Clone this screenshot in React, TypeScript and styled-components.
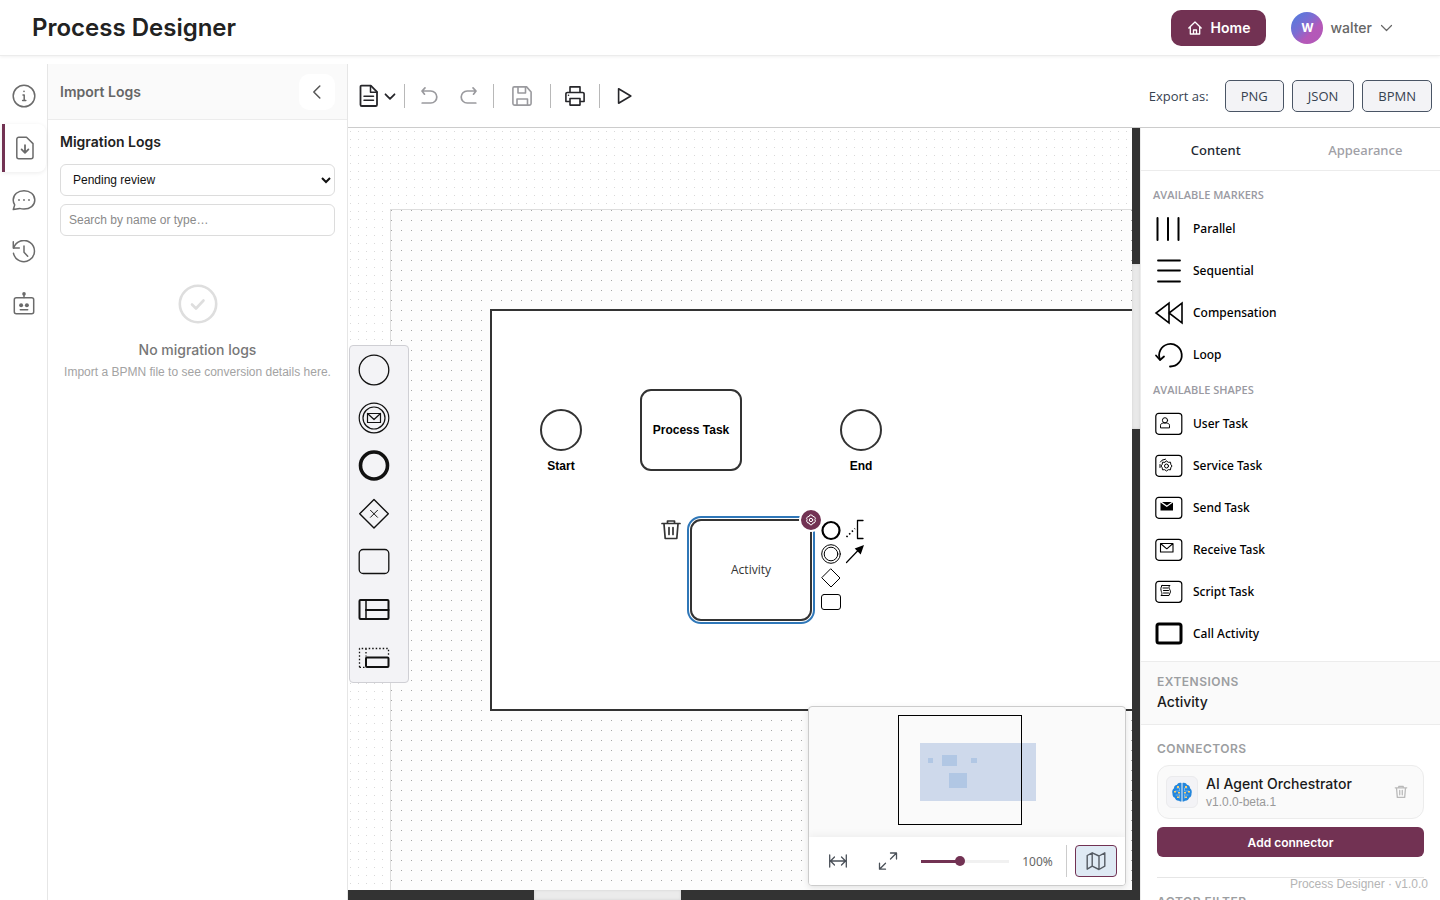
import React, { useState } from 'react';
import styled, { createGlobalStyle, css } from 'styled-components';

const ui = `Inter, "Liberation Sans", sans-serif`;
const small = `"Liberation Sans", Arial, sans-serif`;
const editor = `"Noto Sans", "Open Sans", sans-serif`;
const compact = `"Open Sans", "Noto Sans", sans-serif`;
const plum = '#723253';
const ink = '#333333';

const GlobalStyle = createGlobalStyle`
  *, *::before, *::after { box-sizing: border-box; }
  body { margin: 0; background: #ffffff; font-family: ${ui}; color: #1f1f1f; }
  button, input, select { font: inherit; color: inherit; }
  button { padding: 0; border: 0; background: none; cursor: pointer; }
  h1, h2, h3, p { margin: 0; }
  svg { display: block; flex: none; }
`;

/* ---------- page shell ---------- */

const Page = styled.div`
  position: relative;
  display: flex;
  flex-direction: column;
  height: 100vh;
  overflow: hidden;
`;

const Header = styled.header`
  display: flex;
  align-items: center;
  flex: none;
  height: 56px;
  padding: 0 47px 0 32px;
  border-bottom: 1px solid #ececec;
  box-shadow: 0 1px 3px rgba(0, 0, 0, 0.06);
`;

const Title = styled.h1`
  flex: 1;
  font-size: 24px;
  line-height: 32px;
  font-weight: 600;
  color: #222222;
`;

const HomeButton = styled.button`
  display: flex;
  align-items: center;
  gap: 8px;
  height: 36px;
  padding: 0 16px;
  border-radius: 10px;
  background: ${plum};
  color: #ffffff;
  font-size: 14px;
  font-weight: 600;
`;

const UserButton = styled.button`
  display: flex;
  align-items: center;
  gap: 7px;
  margin-left: 25px;
  color: #666666;
  font-size: 14px;
  font-weight: 500;
`;

const Avatar = styled.span`
  display: grid;
  place-items: center;
  width: 32px;
  height: 32px;
  border-radius: 50%;
  background: linear-gradient(135deg, #4a7fe0 0%, #7b6dd3 40%, #b558b8 65%, #b05ab8 100%);
  color: #ffffff;
  font-size: 12px;
  font-weight: 700;
`;

const Body = styled.div`
  display: flex;
  flex: 1;
  min-height: 0;
  padding-top: 8px;
`;

/* ---------- left rail and panel ---------- */

const Rail = styled.nav`
  display: flex;
  flex-direction: column;
  gap: 4px;
  flex: none;
  width: 48px;
  padding: 8px 1px 0 0;
  border-right: 1px solid #e6e6e6;
  color: #6b6b6b;
`;

const RailButton = styled.button<{ $active?: boolean }>`
  display: grid;
  place-items: center;
  height: 48px;
  margin-left: 2px;
  color: inherit;
  ${p =>
    p.$active &&
    css`
      padding-right: 1px;
      border-left: 3px solid ${plum};
      border-radius: 0 8px 8px 0;
      box-shadow: 0 1px 4px rgba(0, 0, 0, 0.08);
    `}
`;

const Panel = styled.aside`
  display: flex;
  flex-direction: column;
  flex: none;
  width: 300px;
  border-right: 1px solid #e6e6e6;
`;

const PanelHeader = styled.div`
  display: flex;
  align-items: center;
  justify-content: space-between;
  height: 56px;
  padding: 0 12px;
  border-bottom: 1px solid #ececec;
  background: #fafafa;
`;

const PanelTitle = styled.h2`
  font-size: 14px;
  line-height: 20px;
  font-weight: 600;
  color: #666666;
`;

const CollapseButton = styled.button`
  display: grid;
  place-items: center;
  width: 36px;
  height: 36px;
  border-radius: 10px;
  background: #ffffff;
  color: #555555;
`;

const PanelBody = styled.div`
  display: flex;
  flex-direction: column;
  gap: 8px;
  padding: 12px;
`;

const Subtitle = styled.h3`
  margin-bottom: 4px;
  font-size: 14px;
  line-height: 20px;
  font-weight: 600;
  color: #222222;
`;

const fieldStyle = css`
  width: 100%;
  height: 32px;
  padding: 0 8px;
  border: 1px solid #dcdcdc;
  border-radius: 6px;
  background: #ffffff;
  font-family: ${small};
  font-size: 12px;
`;

const Select = styled.select`
  ${fieldStyle}
  color: #111111;
`;

const Search = styled.input`
  ${fieldStyle}
  &::placeholder { color: #8a8a8a; opacity: 1; }
`;

const Empty = styled.div`
  display: flex;
  flex-direction: column;
  align-items: center;
  gap: 4px;
  padding-top: 40px;
  text-align: center;
  color: #dedede;
`;

const EmptyTitle = styled.p`
  margin-top: 12px;
  font-size: 14px;
  line-height: 20px;
  font-weight: 500;
  color: #777777;
`;

const EmptyText = styled.p`
  font-family: ${small};
  font-size: 12px;
  line-height: 16px;
  white-space: nowrap;
  color: #a3a3a3;
`;

/* ---------- toolbar ---------- */

const Main = styled.main`
  display: flex;
  flex-direction: column;
  flex: 1;
  min-width: 0;
  font-family: ${editor};
`;

const Toolbar = styled.div`
  display: flex;
  align-items: center;
  flex: none;
  height: 64px;
  padding: 0 8px 0 9px;
  border-bottom: 1px solid #cccccc;
`;

const ToolGroup = styled.div<{ $wide?: boolean }>`
  display: flex;
  align-items: center;
  gap: 16px;
  padding: 0 ${p => (p.$wide ? 16 : 12)}px;
  &:first-child { gap: 2px; padding: 0 8px 0 0; }
  & + & { border-left: 1px solid #b8b8b8; }
`;

const ToolButton = styled.button<{ $muted?: boolean }>`
  display: flex;
  align-items: center;
  gap: 3px;
  color: ${p => (p.$muted ? '#9a9a9e' : '#26262a')};
`;

const ExportGroup = styled.div`
  display: flex;
  align-items: center;
  gap: 8px;
  margin-left: auto;
  color: #364250;
  font-family: ${compact};
  font-size: 13px;
  font-weight: 500;
`;

const ExportLabel = styled.span`
  margin-right: 8px;
`;

const ExportButton = styled.button`
  height: 32px;
  padding: 0 15px;
  border: 1px solid #4a5565;
  border-radius: 5px;
  background: #f3f3f6;
`;

const Workspace = styled.div`
  display: flex;
  flex: 1;
  min-height: 0;
`;

/* ---------- canvas ---------- */

const Canvas = styled.section`
  position: relative;
  display: grid;
  grid-template: minmax(0, 1fr) 10px / minmax(0, 1fr) 8px;
  flex: 1;
  min-width: 0;
  background: ${ink};
`;

const Viewport = styled.div`
  position: relative;
  overflow: hidden;
  background-color: #ffffff;
  background-image: conic-gradient(from 0deg at 1px 1px, transparent 270deg, #d9d9d9 0);
  background-position: 2px 3px;
  background-size: 8px 8px;
`;

const Paper = styled.div`
  position: absolute;
  inset: 81px 0 0 42px;
  border: solid #dddddd;
  border-width: 1px 0 0 1px;
  background-color: #fcfcfc;
  background-image: conic-gradient(from 0deg at 1px 1px, transparent 270deg, #a6a6a6 0);
  background-size: 10px 10px;
`;

const VerticalTrack = styled.div`
  padding-top: 136px;
`;

const HorizontalTrack = styled.div`
  grid-row: 2;
  padding-left: 186px;
`;

const VerticalThumb = styled.div`
  height: 165px;
  background: #e9e9e9;
  box-shadow: inset 0 0 3px #cfcfcf;
`;

const HorizontalThumb = styled.div`
  width: 147px;
  height: 10px;
  background: #ebebeb;
  box-shadow: inset 0 0 3px #cfcfcf;
`;

const Node = styled.div<{ $x: number; $y: number; $w: number; $h: number; $r?: string; $bold?: boolean }>`
  position: absolute;
  left: ${p => p.$x}px;
  top: ${p => p.$y}px;
  width: ${p => p.$w}px;
  height: ${p => p.$h}px;
  display: grid;
  place-items: center;
  border: 2px solid ${ink};
  border-radius: ${p => p.$r ?? '0'};
  background: #ffffff;
  color: ${p => (p.$bold ? '#000000' : '#333333')};
  font-family: ${p => (p.$bold ? small : compact)};
  font-size: 12px;
  line-height: 16px;
  font-weight: ${p => (p.$bold ? 700 : 400)};
  white-space: nowrap;
`;

const Selection = styled.div`
  position: absolute;
  inset: -5px;
  border: 2px solid #2f77b8;
  border-radius: 14px;
`;

const EventLabel = styled.span`
  position: absolute;
  top: 47px;
`;

const GearBadge = styled.button`
  position: absolute;
  top: -13px;
  right: -13px;
  display: grid;
  place-items: center;
  width: 24px;
  height: 24px;
  border: 2px solid #ffffff;
  border-radius: 50%;
  background: ${plum};
  color: #ffffff;
`;

const ContextTrash = styled.button`
  position: absolute;
  top: -2px;
  left: -32px;
  color: ${ink};
`;

const ContextPad = styled.div`
  position: absolute;
  top: -3px;
  left: 127px;
  display: grid;
  grid-template-columns: 24px 24px;
  grid-auto-rows: 24px;
  color: #000000;
  & > :nth-child(n + 5) { grid-column: 1; }
`;

const Palette = styled.div`
  position: absolute;
  z-index: 1;
  top: 50%;
  left: 1px;
  transform: translateY(-50%);
  display: flex;
  flex-direction: column;
  width: 60px;
  border: 1px solid #cfcfd4;
  border-radius: 4px;
  background: #f3f3f6;
`;

const PaletteButton = styled.button`
  display: flex;
  align-items: center;
  height: 48px;
  padding-left: 8px;
  color: #111111;
`;

const Minimap = styled.div`
  position: absolute;
  right: 6px;
  bottom: 4px;
  width: 318px;
  border: 1px solid #cccccc;
  border-radius: 4px;
  background: #fafafa;
  overflow: hidden;
  box-shadow: 0 2px 6px rgba(0, 0, 0, 0.1);
`;

const ZoomBar = styled.div`
  display: flex;
  align-items: center;
  height: 48px;
  padding: 0 8px 0 4px;
  background: #ffffff;
  box-shadow: 0 -2px 8px rgba(0, 0, 0, 0.05);
  color: #4a5058;
`;

const ZoomButton = styled.button`
  display: grid;
  place-items: center;
  width: 50px;
  height: 32px;
`;

const ZoomSlider = styled.input`
  appearance: none;
  width: 88px;
  height: 10px;
  margin: 0 0 0 8px;
  background: linear-gradient(${plum}, ${plum}) left center / 44% 3px no-repeat,
    linear-gradient(#f1f1f1, #f1f1f1) center / 100% 3px no-repeat;
  &::-webkit-slider-thumb {
    appearance: none;
    width: 10px;
    height: 10px;
    border-radius: 50%;
    background: ${plum};
  }
`;

const ZoomValue = styled.span`
  flex: 1;
  text-align: center;
  font-size: 12px;
  color: #666666;
`;

const MapToggleWrap = styled.div`
  padding-left: 8px;
  border-left: 1px solid #cccccc;
`;

const MapToggle = styled.button`
  display: grid;
  place-items: center;
  width: 42px;
  height: 32px;
  border: 1px solid ${plum};
  border-radius: 4px;
  background: #dfeaf4;
  color: #555b63;
`;

/* ---------- properties panel ---------- */

const Properties = styled.aside`
  flex: none;
  width: 300px;
  overflow: hidden;
  border-left: 1px solid #ececec;
  background: #ffffff;
`;

const Tabs = styled.div`
  display: grid;
  grid-template-columns: 1fr 1fr;
  height: 43px;
  border-bottom: 1px solid #ececec;
`;

const Tab = styled.button<{ $active?: boolean }>`
  padding-top: 2px;
  font-size: 13px;
  font-weight: 500;
  color: ${p => (p.$active ? '#222831' : '#a0a0a6')};
`;

const ShapeList = styled.div`
  padding: 16px 12px 6px;
`;

const ListHeading = styled.h3`
  margin-bottom: 5px;
  font-family: ${compact};
  font-size: 11px;
  line-height: 16px;
  font-weight: 600;
  color: #9a9aa2;
  button + & { margin-top: 6px; }
`;

const ShapeButton = styled.button`
  display: flex;
  align-items: center;
  gap: 8px;
  width: 100%;
  height: 42px;
  font-size: 12px;
  line-height: 18px;
  font-weight: 500;
  color: #000000;
`;

const Extensions = styled.section`
  display: flex;
  flex-direction: column;
  gap: 2px;
  padding: 12px 16px;
  border: solid #ececec;
  border-width: 1px 0;
  background: #fafafa;
  font-family: ${ui};
`;

const Caption = styled.h3`
  font-size: 12px;
  line-height: 16px;
  font-weight: 600;
  letter-spacing: 0.04em;
  color: #9c9ea1;
`;

const ItemName = styled.p`
  font-size: 14px;
  line-height: 20px;
  font-weight: 500;
  color: #1a1a1a;
`;

const ItemVersion = styled.p`
  font-family: ${small};
  font-size: 12px;
  line-height: 16px;
  color: #999999;
`;

const Connectors = styled.section`
  display: flex;
  flex-direction: column;
  gap: 8px;
  padding: 16px;
  font-family: ${ui};
`;

const Connector = styled.div`
  display: flex;
  align-items: center;
  gap: 8px;
  height: 54px;
  padding: 0 15px 0 8px;
  border: 1px solid #ececec;
  border-radius: 12px;
  background: #fafafa;
`;

const ConnectorIcon = styled.span`
  display: grid;
  place-items: center;
  width: 32px;
  height: 32px;
  border: 1px solid #ebebed;
  border-radius: 6px;
  background: #f3f3f6;
`;

const ConnectorText = styled.div`
  flex: 1;
`;

const RemoveButton = styled.button`
  color: #b9b9b9;
`;

const AddButton = styled.button`
  height: 30px;
  border-radius: 6px;
  background: ${plum};
  color: #ffffff;
  font-size: 12px;
  font-weight: 600;
`;

const ActorFilter = styled.div`
  margin-top: 12px;
  padding-top: 16px;
  border-top: 1px solid #e6e6e6;
`;

const Version = styled.footer`
  position: absolute;
  right: 12px;
  bottom: 8px;
  font-family: ${small};
  font-size: 12px;
  line-height: 16px;
  color: #b5b5b5;
`;

/* ---------- icons ---------- */

type IconProps = { w?: number; h?: number; s?: number; children: React.ReactNode };

const Icon = ({ w = 24, h = w, s = 1.5, children }: IconProps) => (
  <svg width={w} height={h} viewBox={`0 0 ${w} ${h}`} fill="none" stroke="currentColor" strokeWidth={s}
    strokeLinecap="round" strokeLinejoin="round" aria-hidden="true">
    {children}
  </svg>
);

const railItems = [
  { name: 'Information', art: <><circle cx="12" cy="12" r="10.8" /><path d="M11 11h1.2v5.2M10.6 16.4h3.2" /><circle cx="12" cy="7.4" r=".8" fill="currentColor" stroke="none" /></> },
  { name: 'Import logs', active: true, art: <><path d="M5.8 1.2h7.7L20 7.6v13.2a2 2 0 0 1-2 2H5.8a2 2 0 0 1-2-2V3.2a2 2 0 0 1 2-2z" /><path d="M12 9.2v7.6M8.6 13.4l3.4 3.4 3.4-3.4" strokeWidth="1.8" /></> },
  { name: 'Comments', art: <><path d="M1.3 21.5l1.4-4.6C1.7 15.4 1.2 13.7 1.2 12 1.2 6.4 6 2.7 12 2.7S22.8 6.4 22.8 12 18 21 12 21c-1.5 0-3-.2-4.3-.6z" /><g fill="currentColor" stroke="none"><circle cx="7" cy="12" r=".9" /><circle cx="12" cy="12" r=".9" /><circle cx="17" cy="12" r=".9" /></g></> },
  { name: 'History', art: <><path d="M1.3 1.8v6.200h6" /><path d="M1.7 8A10.600 10.600 0 1 1 1.5 13.300" /><path d="M12 6v6.200l3.700 4" /></> },
  { name: 'Assistant', art: <><rect x="2.300" y="5.800" width="19.400" height="16" rx="2" /><path d="M12 2v3.500M8.300 17.800h7.400" /><g fill="currentColor" stroke="none"><circle cx="12" cy="1.900" r="1.800" /><circle cx="9.100" cy="13.200" r="2" /><circle cx="14.900" cy="13.200" r="2" /></g></> },
];

const FileArt = () => (
  <Icon w={24} s={1.8}>
    <path d="M4.500 1.700h9.300L20 7.900v12.800a1.300 1.300 0 0 1-1.300 1.300H4.800a1.300 1.300 0 0 1-1.300-1.300V2.700a1 1 0 0 1 1-1z" />
    <path d="M13.500 1.700v6.500H20M7 12.200h9.500M7 16.200h9.500" strokeWidth="1.500" />
  </Icon>
);
const DownArt = () => <Icon w={12} s={1.8}><path d="M1.500 4.300L6 8.800l4.500-4.500" /></Icon>;
const UndoArt = () => <Icon s={1.7}><path d="M8 3.800L5 7l2.500 3.200M5 7h8.800a6 6 0 0 1 0 12H5.200" /></Icon>;
const RedoArt = () => <Icon s={1.7}><path d="M16 3.800L19 7l-2.500 3.200M19 7h-8.800a6 6 0 0 0 0 12h8.600" /></Icon>;
const SaveArt = () => (
  <Icon s={1.6}>
    <path d="M4.200 2.900h12.400L21.100 8v11.300a1.800 1.800 0 0 1-1.800 1.800H4.700a1.800 1.800 0 0 1-1.800-1.800V4.200a1.300 1.300 0 0 1 1.300-1.300z" />
    <path d="M8 3v6h7.500V3M7 21v-6h10.500v6" />
  </Icon>
);
const PrinterArt = () => (
  <Icon s={1.6}>
    <path d="M7 8V2.900h10V8M6.500 17.500H2.900V10a1.500 1.500 0 0 1 1.500-1.500h15.200a1.500 1.500 0 0 1 1.500 1.500v7.500h-3.600" />
    <path d="M7 14.500h10v6.600H7z" />
    <circle cx="5.500" cy="11.200" r=".8" fill="currentColor" stroke="none" />
  </Icon>
);
const PlayArt = () => <Icon s={1.6}><path d="M6.600 4.800L18.800 12 6.600 19.200z" /></Icon>;

const HomeArt = () => (
  <Icon w={16} s={1.3}>
    <path d="M1.800 8L8 2l6.200 6M3.300 6.800v7.200h9.400V6.800M6.500 14v-4h3v4" />
  </Icon>
);

const TrashArt = ({ w = 22, s = 1.7 }: { w?: number; s?: number }) => (
  <svg width={w} height={w} viewBox="0 0 22 22" fill="none" stroke="currentColor" strokeWidth={s}
    strokeLinecap="round" strokeLinejoin="round" aria-hidden="true">
    <path d="M2 4.500h18M7.500 4V2h7v2M4 5l1.200 14.500h11.600L18 5M9 8.500v7M13 8.500v7" />
  </svg>
);

const GearArt = () => (
  <Icon w={12} s={1}>
    <path d="M6 1l1.300.3.6 1.200 1.300.1 1.200 1.600-.5 1.300.5 1.600-1.100 1.800-1.400.1-.6 1.300L6 11l-1.300-.7-.6-1.300-1.400-.1-1.100-1.800.5-1.600-.5-1.300 1.200-1.600 1.300-.1.600-1.200z" />
    <circle cx="6" cy="6" r="1.700" />
  </Icon>
);

const paletteItems = [
  { name: 'Start event', art: <circle cx="16" cy="16" r="14.800" strokeWidth="1.300" /> },
  { name: 'Message event', art: <g strokeWidth="1.200"><circle cx="16" cy="16" r="14.800" /><circle cx="16" cy="16" r="11" /><path d="M9.500 11.500h13v9h-13zM9.500 11.500l6.500 6 6.500-6" /></g> },
  { name: 'End event', art: <circle cx="16" cy="15.500" r="13.500" strokeWidth="3.600" /> },
  { name: 'Gateway', art: <g><path d="M16 1.500L30.300 15.800 16 30 1.700 15.800z" strokeWidth="1.400" /><path d="M12.500 12.300l7 7M19.500 12.300l-7 7" strokeWidth="1" /></g> },
  { name: 'Task', art: <rect x="1.200" y="3.500" width="29.600" height="24" rx="4" strokeWidth="1.300" /> },
  { name: 'Pool', art: <g strokeWidth="2"><rect x="1.500" y="6" width="29" height="19" rx="1" /><path d="M8 6v19" strokeWidth="1.500" /><path d="M8 16h22.500" /></g> },
  { name: 'Group', art: <g><path d="M1.500 25.300V6.500h29v8M8 6.500v8M1.500 25.300H8" strokeWidth="1.300" strokeDasharray="1.500 2" strokeLinecap="butt" /><rect x="8" y="15.500" width="22.500" height="9.500" rx="1" strokeWidth="2" /></g> },
];

const contextItems = [
  { name: 'Append end event', art: <circle cx="12" cy="12.500" r="8.500" strokeWidth="2.200" /> },
  { name: 'Add annotation', art: <g><path d="M20 2.500h-5.500v18H20" strokeWidth="1.300" /><path d="M3.500 19L12 10.500" strokeDasharray="1.500 2.300" strokeWidth="1.600" strokeLinecap="butt" /></g> },
  { name: 'Append intermediate event', art: <g strokeWidth="1"><circle cx="12" cy="12" r="9.300" /><circle cx="12" cy="12" r="6.800" /></g> },
  { name: 'Connect', art: <g><path d="M3.500 20.500L15 8.500" strokeWidth="1.200" /><path d="M21 3l-3.300 9.500-6-6z" fill="currentColor" stroke="none" /></g> },
  { name: 'Append gateway', art: <path d="M12 3l9 9-9 9-9-9z" strokeWidth="1" /> },
  { name: 'Append task', art: <rect x="2.500" y="4.500" width="19" height="15" rx="2.500" strokeWidth="1" /> },
];

const Task = <rect x="2.800" y="5.300" width="26" height="21" rx="3" strokeWidth="1.200" />;

const markers = [
  { name: 'Parallel', art: <path d="M4.500 5v22M15 5v22M25.500 5v22" strokeWidth="2" /> },
  { name: 'Sequential', art: <path d="M5 5.500h22M5 15.500h22M5 26.500h22" strokeWidth="1.800" /> },
  { name: 'Compensation', art: <path d="M16 6v20L3 16zM29 6v20L16 16z" strokeWidth="1.600" strokeLinejoin="miter" /> },
  { name: 'Loop', art: <g strokeWidth="1.800"><path d="M7 20.500A11.300 11.300 0 1 1 17 27.500" /><path d="M3 16.500l4 4.500 4-3.500" /></g> },
];

const shapes = [
  { name: 'User Task', art: <g>{Task}<g strokeWidth="1"><circle cx="12" cy="12.300" r="2.600" /><path d="M7.500 19.500v-2.200c0-1.400 1.200-2 3-2.300h3c1.800.3 3 .9 3 2.300v2.200z" /></g></g> },
  { name: 'Service Task', art: <g>{Task}<g strokeWidth="1"><path d="M13.500 11l1.800 1.300 2.200-.1.300 2.200 1.200 1.600-1.200 1.700-.3 2.100-2.200-.1-1.800 1.300-1.800-1.300-2.200.1-.3-2.100L8 16l1.200-1.600.3-2.200 2.200.1z" /><circle cx="13.500" cy="16" r="2" /><path d="M7 17.500v-3M7.500 12L9 10.200l3.500-1" /></g></g> },
  { name: 'Send Task', art: <g>{Task}<path d="M7.500 10.500l6.300 4.500 6.200-4.500v8H7.500z" fill="currentColor" stroke="none" /><path d="M9 10h9.800l-4.900 3.600z" fill="currentColor" stroke="none" /></g> },
  { name: 'Receive Task', art: <g>{Task}<path d="M7.500 9.500H20V18H7.500zM7.500 9.500l6.300 5.300L20 9.500" strokeWidth="1.100" /></g> },
  { name: 'Script Task', art: <g>{Task}<path d="M9 9.500h8c-3 2.500 2 5 0 7.500l-1 2.500H8c3-2.500-2.500-5 1-10zM10 12h5M10.500 14.500h5M10.500 17h5" strokeWidth="1" /></g> },
  { name: 'Call Activity', art: <rect x="4" y="6" width="24" height="19" rx="2" strokeWidth="3" /> },
];

const ShapeIcon = ({ children }: { children: React.ReactNode }) => <Icon w={32}>{children}</Icon>;

const BrainArt = () => (
  <Icon w={20} s={1.2}>
    <path d="M9.500 1C7 .2 5.800 1.500 5 2.700 2.800 3 2 4.500 2 6.300.5 7.500-.2 9.500.5 11.500c-.2 2.300.8 3.700 2.300 4.300C3.500 18 5.200 19 7 18.700c1 .9 2 1 2.500.8zM10.500 1c2.500-.8 3.700.5 4.500 1.700 2.200.3 3 1.800 3 3.600 1.500 1.200 2.200 3.200 1.500 5.200.2 2.300-.8 3.700-2.300 4.300-.7 2.200-2.400 3.200-4.200 2.900-1 .9-2 1-2.500.8z" fill="#2486db" stroke="none" />
    <g stroke="#7fbdf2" strokeWidth="0.800"><path d="M5 6h2.500v3H3.500M4 13h3.500M15 6h-2.500v3h4M16 13h-3.500M7.500 13v3M12.500 13v3" /></g>
    <g fill="#f7cf74" stroke="none"><rect x="5" y="4" width="2" height="2" /><rect x="13" y="4" width="2" height="2" /><rect x="2" y="9" width="2" height="1.500" /><rect x="16" y="9" width="2" height="1.500" /><rect x="6" y="10" width="2" height="1.500" /><rect x="12" y="10" width="2" height="1.500" /><rect x="5" y="14.500" width="2" height="1.500" /><rect x="13" y="14.500" width="2" height="1.500" /></g>
  </Icon>
);

/* ---------- page ---------- */

export default function App() {
  const [status, setStatus] = useState('pending');
  const [query, setQuery] = useState('');
  const [zoom, setZoom] = useState(44);

  return (
    <>
      <GlobalStyle />
      <Page>
        <Header>
          <Title>Process Designer</Title>
          <HomeButton><HomeArt />Home</HomeButton>
          <UserButton>
            <Avatar>W</Avatar>
            walter
            <Icon w={14} s={1.2}><path d="M2.500 4.500l5 5 5-5" /></Icon>
          </UserButton>
        </Header>
        <Body>
          <Rail aria-label="Panels">
            {railItems.map(item => (
              <RailButton key={item.name} $active={item.active} aria-label={item.name}>
                <Icon>{item.art}</Icon>
              </RailButton>
            ))}
          </Rail>
          <Panel>
            <PanelHeader>
              <PanelTitle>Import Logs</PanelTitle>
              <CollapseButton aria-label="Collapse panel">
                <Icon w={16} s={1.5}><path d="M10.800 2L4.800 8l6 6" /></Icon>
              </CollapseButton>
            </PanelHeader>
            <PanelBody>
              <Subtitle>Migration Logs</Subtitle>
              <Select aria-label="Status" value={status} onChange={e => setStatus(e.target.value)}>
                <option value="pending">Pending review</option>
                <option value="done">Reviewed</option>
              </Select>
              <Search aria-label="Search logs" placeholder="Search by name or type…" value={query}
                onChange={e => setQuery(e.target.value)} />
              <Empty>
                <Icon w={40} s={2.6}><circle cx="20" cy="20" r="18.200" /><path d="M14 20.500l4 4 7.500-8" /></Icon>
                <EmptyTitle>No migration logs</EmptyTitle>
                <EmptyText>Import a BPMN file to see conversion details here.</EmptyText>
              </Empty>
            </PanelBody>
          </Panel>
          <Main>
            <Toolbar>
              <ToolGroup>
                <ToolButton aria-label="File"><FileArt /><DownArt /></ToolButton>
              </ToolGroup>
              <ToolGroup>
                <ToolButton $muted aria-label="Undo"><UndoArt /></ToolButton>
                <ToolButton $muted aria-label="Redo"><RedoArt /></ToolButton>
              </ToolGroup>
              <ToolGroup $wide>
                <ToolButton $muted aria-label="Save"><SaveArt /></ToolButton>
              </ToolGroup>
              <ToolGroup>
                <ToolButton aria-label="Print"><PrinterArt /></ToolButton>
              </ToolGroup>
              <ToolGroup>
                <ToolButton aria-label="Run"><PlayArt /></ToolButton>
              </ToolGroup>
              <ExportGroup>
                <ExportLabel>Export as:</ExportLabel>
                <ExportButton>PNG</ExportButton>
                <ExportButton>JSON</ExportButton>
                <ExportButton>BPMN</ExportButton>
              </ExportGroup>
            </Toolbar>
            <Workspace>
              <Canvas>
                <Viewport>
                  <Paper />
                  <Node $x={142} $y={181} $w={802} $h={402} />
                  <Node $x={192} $y={281} $w={42} $h={42} $r="50%" $bold><EventLabel>Start</EventLabel></Node>
                  <Node $x={292} $y={261} $w={102} $h={82} $r="11px" $bold>Process Task</Node>
                  <Node $x={492} $y={281} $w={42} $h={42} $r="50%" $bold><EventLabel>End</EventLabel></Node>
                  <Node $x={342} $y={391} $w={122} $h={102} $r="11px">
                    Activity
                    <Selection />
                    <GearBadge aria-label="Configure"><GearArt /></GearBadge>
                    <ContextTrash aria-label="Delete"><TrashArt /></ContextTrash>
                    <ContextPad>
                      {contextItems.map(item => (
                        <button key={item.name} aria-label={item.name}><Icon>{item.art}</Icon></button>
                      ))}
                    </ContextPad>
                  </Node>
                  <Minimap>
                    <svg width="316" height="130" viewBox="0 0 316 130" aria-hidden="true">
                      <rect x="111" y="36" width="116" height="58" fill="#ced9eb" />
                      <g fill="#b1c7e4">
                        <rect x="119" y="51" width="5" height="5" />
                        <rect x="133" y="48" width="15" height="11" />
                        <rect x="162" y="51" width="6" height="5" />
                        <rect x="140" y="66" width="18" height="15" />
                      </g>
                      <rect x="89.500" y="8.500" width="123" height="109" fill="none" stroke="#000000" />
                    </svg>
                    <ZoomBar>
                      <ZoomButton aria-label="Fit to width">
                        <Icon s={1.3}><path d="M3.700 6v12M20.300 6v12M4.500 12h15M8.500 8l-4 4 4 4M15.500 8l4 4-4 4" /></Icon>
                      </ZoomButton>
                      <ZoomButton aria-label="Fit to screen">
                        <Icon s={1.3}><path d="M14.500 4h6v6M20 4.500l-5.500 5.500M9.500 20.200h-6v-6M4 19.700l5.500-5.500" /></Icon>
                      </ZoomButton>
                      <ZoomSlider type="range" aria-label="Zoom" value={zoom} onChange={e => setZoom(Number(e.target.value))} />
                      <ZoomValue>100%</ZoomValue>
                      <MapToggleWrap>
                        <MapToggle aria-label="Toggle minimap">
                          <Icon w={20} s={1.4}><path d="M1.200 4.500l5-2.700v13.400l-5 3zM6.200 1.800L13 5v13.500l-6.800-3.300M13 5l5.800-3.200v13.400L13 18.500" /></Icon>
                        </MapToggle>
                      </MapToggleWrap>
                    </ZoomBar>
                  </Minimap>
                </Viewport>
                <VerticalTrack><VerticalThumb /></VerticalTrack>
                <HorizontalTrack><HorizontalThumb /></HorizontalTrack>
                <Palette>
                  {paletteItems.map(item => (
                    <PaletteButton key={item.name} aria-label={item.name}><Icon w={32}>{item.art}</Icon></PaletteButton>
                  ))}
                </Palette>
              </Canvas>
              <Properties>
                <Tabs>
                  <Tab $active>Content</Tab>
                  <Tab>Appearance</Tab>
                </Tabs>
                <ShapeList>
                  <ListHeading>AVAILABLE MARKERS</ListHeading>
                  {markers.map(m => (
                    <ShapeButton key={m.name}><ShapeIcon>{m.art}</ShapeIcon>{m.name}</ShapeButton>
                  ))}
                  <ListHeading>AVAILABLE SHAPES</ListHeading>
                  {shapes.map(m => (
                    <ShapeButton key={m.name}><ShapeIcon>{m.art}</ShapeIcon>{m.name}</ShapeButton>
                  ))}
                </ShapeList>
                <Extensions>
                  <Caption>EXTENSIONS</Caption>
                  <ItemName>Activity</ItemName>
                </Extensions>
                <Connectors>
                  <Caption>CONNECTORS</Caption>
                  <Connector>
                    <ConnectorIcon><BrainArt /></ConnectorIcon>
                    <ConnectorText>
                      <ItemName>AI Agent Orchestrator</ItemName>
                      <ItemVersion>v1.0.0-beta.1</ItemVersion>
                    </ConnectorText>
                    <RemoveButton aria-label="Remove connector"><TrashArt w={14} s={2} /></RemoveButton>
                  </Connector>
                  <AddButton>Add connector</AddButton>
                  <ActorFilter><Caption>ACTOR FILTER</Caption></ActorFilter>
                </Connectors>
              </Properties>
            </Workspace>
          </Main>
        </Body>
        <Version>Process Designer · v1.0.0</Version>
      </Page>
    </>
  );
}
